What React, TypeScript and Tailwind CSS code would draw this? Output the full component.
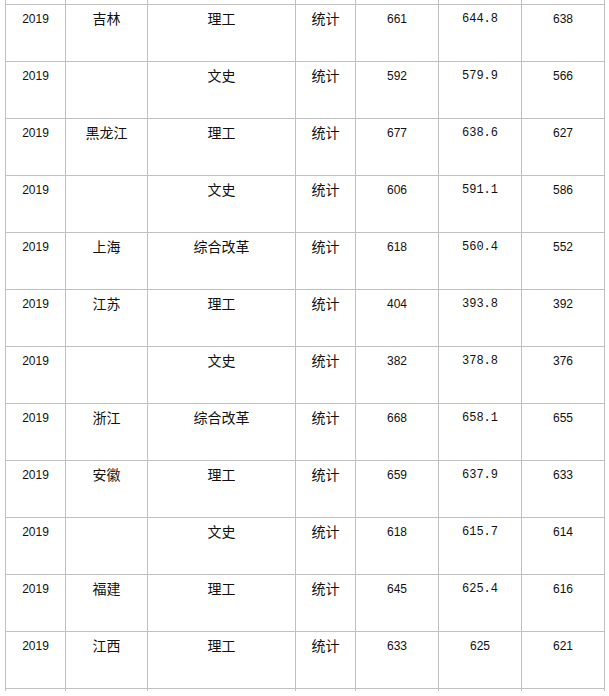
const rows: string[][] = [
  ["2019", "吉林", "理工", "统计", "661", "644.8", "638"],
  ["2019", "", "文史", "统计", "592", "579.9", "566"],
  ["2019", "黑龙江", "理工", "统计", "677", "638.6", "627"],
  ["2019", "", "文史", "统计", "606", "591.1", "586"],
  ["2019", "上海", "综合改革", "统计", "618", "560.4", "552"],
  ["2019", "江苏", "理工", "统计", "404", "393.8", "392"],
  ["2019", "", "文史", "统计", "382", "378.8", "376"],
  ["2019", "浙江", "综合改革", "统计", "668", "658.1", "655"],
  ["2019", "安徽", "理工", "统计", "659", "637.9", "633"],
  ["2019", "", "文史", "统计", "618", "615.7", "614"],
  ["2019", "福建", "理工", "统计", "645", "625.4", "616"],
  ["2019", "江西", "理工", "统计", "633", "625", "621"],
];

const grid =
  "grid grid-cols-[60px_82px_148px_60px_83px_83px_83px] border-l border-[#c0c0c0] w-[600px]";

function Cell({ text }: { text: string }) {
  const isCjk = /[\u4e00-\u9fff]/.test(text);
  const isDecimal = text.includes(".");
  const font = isCjk
    ? "text-[14px] font-['Noto_Sans_CJK_SC',sans-serif] pt-[4px]"
    : isDecimal
    ? "text-[12px] font-['Liberation_Mono',monospace] pt-[5px]"
    : "text-[12px] font-['Liberation_Sans',Arial,sans-serif] pt-[5px]";
  return (
    <div
      className={`h-[57px] border-r border-b border-[#c0c0c0] text-center leading-[18px] text-[#111] ${font}`}
    >
      {text}
    </div>
  );
}

export default function App() {
  return (
    <div className="w-[609px] h-[696px] bg-white overflow-hidden pl-[5px]">
      {/* tail of the previous row, cut off at the top */}
      <div className={grid}>
        {Array.from({ length: 7 }).map((_, i) => (
          <div key={i} className="h-[5px] border-r border-b border-[#c0c0c0]" />
        ))}
      </div>
      {rows.map((row, r) => (
        <div key={r} className={grid}>
          {row.map((text, c) => (
            <Cell key={c} text={text} />
          ))}
        </div>
      ))}
      <div className={grid}>
        {Array.from({ length: 7 }).map((_, i) => (
          <div key={i} className="h-[2px] border-r border-[#c0c0c0]" />
        ))}
      </div>
    </div>
  );
}
